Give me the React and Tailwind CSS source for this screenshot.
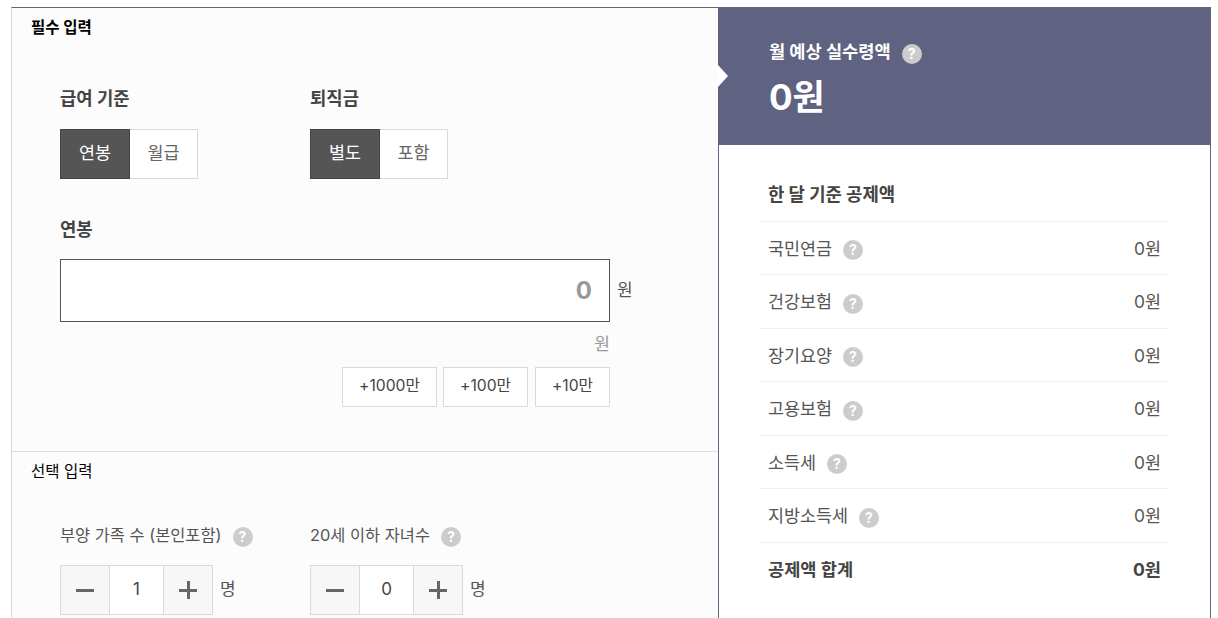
import React from 'react'

function Help({ className = 'ml-[11px]' }) {
  return (
    <span className={`inline-flex items-center justify-center w-5 h-5 mt-[3px] rounded-full bg-[#ccc] text-white text-[14px] font-bold leading-none shrink-0 ${className}`}>?</span>
  )
}

function Toggle({ label, on, off }) {
  return (
    <div className="w-[250px]">
      <div className="h-6 text-[17.8px] font-bold leading-6 text-[#444]">{label}</div>
      <div className="flex mt-[18px]">
        <div className="flex items-center justify-center w-[70px] h-[50px] pb-0.5 text-[17.4px] text-white bg-[#555] border border-[#444]">{on}</div>
        <div className="flex items-center justify-center w-[68px] h-[50px] pb-0.5 text-[17.4px] text-[#666] bg-white border border-l-0 border-[#d9d9d9]">{off}</div>
      </div>
    </div>
  )
}

function Stepper({ label, value }) {
  return (
    <div className="w-[250px]">
      <div className="flex items-center h-6 text-[16.4px] text-[#555]">
        {label}
        <Help />
      </div>
      <div className="flex items-center mt-[18px]">
        <div className="flex h-[50px] border border-[#d9d9d9] bg-white">
          <div className="flex items-center justify-center w-[48px] bg-[#f7f7f7]">
            <span className="w-[18px] h-[3px] bg-[#666]" />
          </div>
          <div className="flex items-center justify-center w-[55px] text-[17px] text-[#444] border-x border-[#d9d9d9]">{value}</div>
          <div className="relative flex items-center justify-center w-[48px] bg-[#f7f7f7]">
            <span className="w-[18px] h-[3px] bg-[#666]" />
            <span className="absolute w-[3px] h-[18px] bg-[#666]" />
          </div>
        </div>
        <span className="ml-[7px] text-[17px] text-[#555]">명</span>
      </div>
    </div>
  )
}

function Row({ label, help = true }) {
  return (
    <div className="flex items-center justify-between h-[53.5px] pt-0.5 pl-2 pr-[7px] border-t border-[#f0f0f0] text-[17.4px] text-[#555]">
      <div className="flex items-center">
        {label}
        {help && <Help />}
      </div>
      <span>0원</span>
    </div>
  )
}

export default function App() {
  return (
    <div className="h-[618px] overflow-hidden bg-white pt-[7px] pl-[11px] pr-[7px] font-['Inter','Noto_Sans_CJK_KR',sans-serif]">
      <div className="flex h-[611px]">
        <div className="w-[707px] bg-[#fcfcfc] border-l border-[#d9d9d9] border-t border-t-[#666]">
          <section className="h-[444px] border-b border-[#ddd] pl-[19px]">
            <h2 className="pt-[9px] text-[15.5px] font-bold leading-[22px] text-black">필수 입력</h2>
            <div className="pl-[29px] pt-[48px]">
              <div className="flex">
                <Toggle label="급여 기준" on="연봉" off="월급" />
                <Toggle label="퇴직금" on="별도" off="포함" />
              </div>
              <div className="h-6 mt-[39px] text-[17.8px] font-bold leading-6 text-[#444]">연봉</div>
              <div className="flex items-center mt-[17px]">
                <div className="flex items-center justify-end w-[550px] h-[63px] pr-[17px] bg-white border border-[#555] text-[24px] font-bold text-[#999]">0</div>
                <span className="ml-[7px] text-[17px] text-[#555]">원</span>
              </div>
              <div className="w-[550px] mt-[11px] text-right text-[17px] leading-[22px] text-[#999]">원</div>
              <div className="flex justify-end w-[550px] mt-[12px] text-[15.7px] text-[#444]">
                <div className="flex items-center justify-center w-[95px] h-10 pb-0.5 mr-[6px] bg-white border border-[#d9d9d9]">+1000만</div>
                <div className="flex items-center justify-center w-[85px] h-10 pb-0.5 mr-[7px] bg-white border border-[#d9d9d9]">+100만</div>
                <div className="flex items-center justify-center w-[75px] h-10 pb-0.5 bg-white border border-[#d9d9d9]">+10만</div>
              </div>
            </div>
          </section>
          <section className="pl-[19px]">
            <h2 className="pt-[9px] text-[15.5px] font-normal leading-[22px] text-black">선택 입력</h2>
            <div className="flex pl-[29px] pt-[40px]">
              <Stepper label="부양 가족 수 (본인포함)" value="1" />
              <Stepper label="20세 이하 자녀수" value="0" />
            </div>
          </section>
        </div>
        <div className="relative flex flex-col w-[493px]">
          <span className="absolute left-0 top-[58px] w-0 h-0 border-y-[11px] border-y-transparent border-l-[10px] border-l-white" />
          <header className="h-[138px] pl-[51px] pt-[33px] bg-[#5f6280] text-white">
            <div className="flex items-center h-6 text-[17.6px] font-bold">
              월 예상 실수령액
              <Help />
            </div>
            <div className="mt-[11px] text-[35px] font-bold leading-[44px]">0원</div>
          </header>
          <div className="flex-1 pl-[41px] pr-[42px] bg-white border-x border-[#5f6280]">
            <h3 className="pl-2 pt-[37px] pb-[12.75px] text-[17.8px] font-bold leading-[26px] text-[#444]">한 달 기준 공제액</h3>
            <Row label="국민연금" />
            <Row label="건강보험" />
            <Row label="장기요양" />
            <Row label="고용보험" />
            <Row label="소득세" />
            <Row label="지방소득세" />
            <div className="flex items-center justify-between h-[53.5px] pt-0.5 pl-2 pr-[7px] border-t border-[#f0f0f0] text-[17.6px] font-bold text-[#444]">
              <span>공제액 합계</span>
              <span>0원</span>
            </div>
          </div>
        </div>
      </div>
    </div>
  )
}
